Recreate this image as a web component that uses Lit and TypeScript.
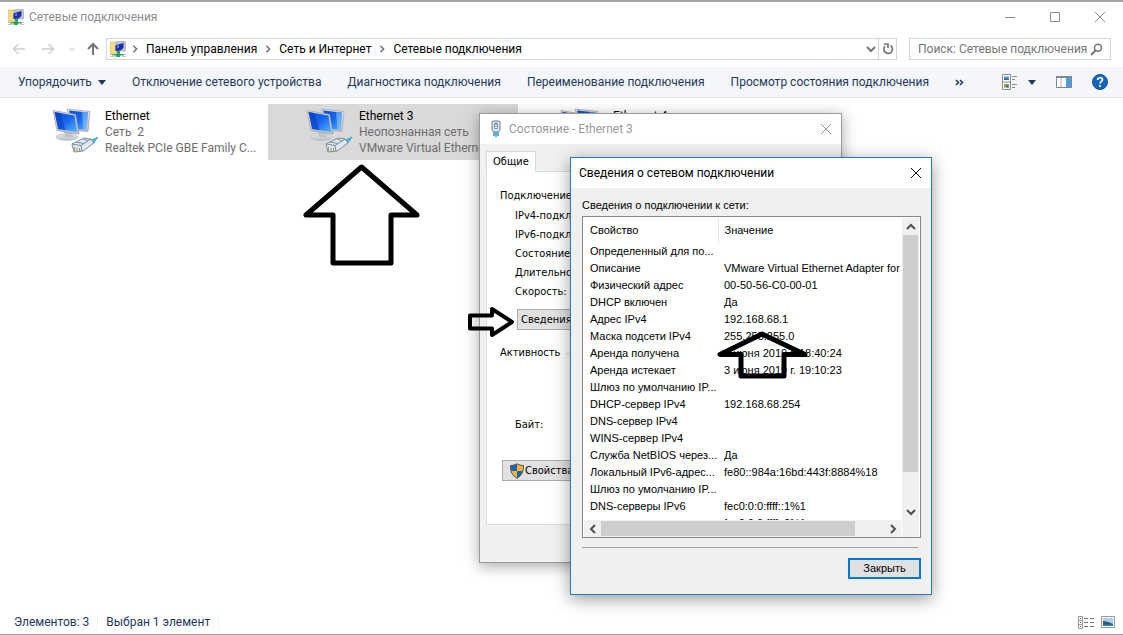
import { LitElement, html, css } from "lit";
import { customElement } from "lit/decorators.js";

const networkFolder = html`<svg width="16" height="16" viewBox="0 0 16 16" aria-hidden="true">
  <path d="M0 1h6l1 1v11H0z" fill="#f3dc83" stroke="#d5b95c" stroke-width=".6" />
  <path d="M6 1l9-1 1 7-1 3H6z" fill="#c3c9d4" stroke="#8f97a8" stroke-width=".6" />
  <path d="M5.500 4.500l4-1.500 4-1v5l-3 2.500-5 .5z" fill="#1c2fa8" />
  <path d="M7 5l2-1v3H7z" fill="#5d7ff0" />
  <path d="M7 10h3v3h4v1.500h-4V16H6v-1.500H2V13h5z" fill="#2aa35a" />
  <path d="M0 13.500h4M13 13.500h3M0 15.500h5M12 15.500h4" stroke="#9fb5b0" stroke-width=".7" />
</svg>`;

const adapterIcon = html`<svg width="48" height="48" viewBox="0 0 48 48" aria-hidden="true">
  <defs>
    <linearGradient id="scr" x1="0" y1="0" x2="1" y2="1">
      <stop offset="0" stop-color="#0d48d0" /><stop offset=".5" stop-color="#1767f2" />
      <stop offset="1" stop-color="#5fb6ff" />
    </linearGradient>
    <linearGradient id="metal" x1="0" y1="0" x2="0" y2="1">
      <stop offset="0" stop-color="#e6e8ea" /><stop offset="1" stop-color="#bcc1c7" />
    </linearGradient>
  </defs>
  <path d="M15 1l23 2.500-2 20-14-1z" fill="url(#metal)" stroke="#a5abb2" stroke-width=".8" />
  <path d="M17 2.500l19 2-1.500 17.500-11-1z" fill="url(#scr)" />
  <path d="M30 4l6 .7-1.500 17-3-.3z" fill="#9ad4ff" opacity=".5" />
  <ellipse cx="15" cy="29" rx="11" ry="3.500" fill="url(#metal)" stroke="#b9bdc2" stroke-width=".6" />
  <path d="M12 23h8l1 6h-8z" fill="#bfc4ca" />
  <path d="M1 2.500l22.500 4L27 26 5 22.500z" fill="url(#metal)" stroke="#9fa6ae" stroke-width=".8" />
  <path d="M2.500 4l20 3.500 2.800 16.500L6.200 21z" fill="url(#scr)" />
  <path d="M2.500 4l6 1 5 17.200-7.300-1.200z" fill="#0839b8" opacity=".5" />
  <path d="M36 32q5 0 10-3l-4 6-6 2z" fill="#45bfe0" stroke="#2b94bd" stroke-width=".6" />
  <path d="M20 36l12-6 7 1 3 4-11 8-9 1z" fill="#dfe8f1" stroke="#6f8397" stroke-width=".9" />
  <path d="M20 36l9 1.500 1 6M29 37.500l10-6.500M24 34l8 1.500M31 31l5 2" fill="none" stroke="#6f8397" stroke-width=".9" />
  <path d="M22.500 39v4M25 39.500v4M27.500 40v3.500" stroke="#9a9254" stroke-width=".9" />
</svg>`;

const cross = html`<svg width="12" height="12" viewBox="0 0 12 12" aria-hidden="true">
  <path d="M1 1l10 10M11 1L1 11" fill="none" stroke="currentColor" />
</svg>`;

const chevron = (d: string, size = 10) => html`<svg width=${size} height=${size} viewBox="0 0 10 10" aria-hidden="true">
  <path d=${d} fill="none" stroke="currentColor" stroke-width="2" />
</svg>`;
const UP = "M1 7l4-4 4 4";
const DOWN = "M1 3l4 4 4-4";
const LEFT = "M7 1L3 5l4 4";
const RIGHT = "M3 1l4 4-4 4";

const adapters = [
  { name: "Ethernet", state: "Сеть  2", device: "Realtek PCIe GBE Family C...", selected: false },
  { name: "Ethernet 3", state: "Неопознанная сеть", device: "VMware Virtual Ethernet ...", selected: true },
  { name: "Ethernet 4", state: "", device: "", selected: false },
];

const details: [string, string][] = [
  ["Определенный для по...", ""],
  ["Описание", "VMware Virtual Ethernet Adapter for VMnet1"],
  ["Физический адрес", "00-50-56-C0-00-01"],
  ["DHCP включен", "Да"],
  ["Адрес IPv4", "192.168.68.1"],
  ["Маска подсети IPv4", "255.255.255.0"],
  ["Аренда получена", "3 июня 2019 г. 18:40:24"],
  ["Аренда истекает", "3 июня 2019 г. 19:10:23"],
  ["Шлюз по умолчанию IP...", ""],
  ["DHCP-сервер IPv4", "192.168.68.254"],
  ["DNS-сервер IPv4", ""],
  ["WINS-сервер IPv4", ""],
  ["Служба NetBIOS через...", "Да"],
  ["Локальный IPv6-адрес...", "fe80::984a:16bd:443f:8884%18"],
  ["Шлюз по умолчанию IP...", ""],
  ["DNS-серверы IPv6", "fec0:0:0:ffff::1%1"],
  ["", "fec0:0:0:ffff::2%1"],
];

const controls = css`
  * { box-sizing: border-box; }
  button {
    font: inherit; color: inherit; background: none; border: 0; padding: 0; margin: 0;
    display: inline-flex; align-items: center; justify-content: center; white-space: nowrap;
  }
  svg { display: block; flex: none; }
`;

@customElement("status-window")
export class StatusWindow extends LitElement {
  static styles = [controls, css`
    :host {
      display: flex; flex-direction: column; background: #f0f0f0; border: 1px solid #9a9a9a;
      box-shadow: 0 3px 14px rgba(0, 0, 0, .35);
      font: 11px/14px "DejaVu Sans Condensed", "DejaVu Sans", sans-serif; color: #000;
    }
    .title { display: flex; align-items: center; gap: 6px; height: 30px; padding: 0 9px; background: #fff; color: #999; font: 12px/16px Roboto, sans-serif; }
    .title .name { flex: 1; }
    .body { flex: 1; display: flex; flex-direction: column; padding: 7px 6px 37px; }
    .tab { align-self: flex-start; height: 21px; padding: 0 6px; background: #fff; border: 1px solid #d9d9d9; border-bottom: 0; margin-bottom: -1px; z-index: 1; }
    .panel { flex: 1; display: flex; flex-direction: column; align-items: flex-start; background: #fff; border: 1px solid #dcdcdc; padding: 15px 13px; }
    .group { display: flex; align-items: center; gap: 6px; align-self: stretch; height: 18px; }
    .group::after { content: ""; flex: 1; border-top: 1px solid #dcdcdc; }
    .facts { list-style: none; margin: 0; padding: 1px 15px 8px; line-height: 19px; }
    .push { height: 21px; padding: 0 3px; background: #e1e1e1; border: 1px solid #adadad; }
    .details { margin: 0 17px 14px; }
    .bytes { padding: 54px 15px 26px; line-height: 18px; }
    .props { margin-left: 2px; padding: 0 6px; }
  `];
  render() {
    return html`
      <header class="title">
        <svg width="14" height="18" viewBox="0 0 14 18" aria-hidden="true">
          <path d="M4 1h6l1 1v8l-2 2H5l-2-2V2z" fill="#dce7f2" stroke="#667d99" />
          <path d="M5.500 3.500h3v5h-3zM7 2v5" fill="#fff" stroke="#7890aa" />
          <path d="M5 12v4M7 12v5M9 12v4" stroke="#2b9fc4" stroke-width="1.500" />
        </svg>
        <span class="name">Состояние - Ethernet 3</span>
        <button aria-label="Закрыть">${cross}</button>
      </header>
      <div class="body">
        <button class="tab" role="tab" aria-selected="true">Общие</button>
        <section class="panel">
          <div class="group">Подключение</div>
          <ul class="facts">
            <li>IPv4-подключение:</li><li>IPv6-подключение:</li><li>Состояние среды:</li>
            <li>Длительность:</li><li>Скорость:</li>
          </ul>
          <button class="push details">Сведения...</button>
          <div class="group">Активность</div>
          <div class="bytes">Байт:</div>
          <button class="push props">
            <svg width="16" height="16" viewBox="0 0 16 16" aria-hidden="true">
              <path d="M8 .8C6 2 3.500 2.500 1.500 2.500c0 6 1.500 10 6.500 12.700 5-2.700 6.500-6.700 6.500-12.700C12.500 2.500 10 2 8 .8z" fill="#1e62b0" />
              <path d="M8 .8C10 2 12.500 2.500 14.500 2.500q0 3-.7 5.500H8zM2.200 8H8v7.200C4.500 13.300 3 11 2.200 8z" fill="#f5b836" />
              <path d="M8 .8C6 2 3.500 2.500 1.500 2.500c0 6 1.500 10 6.500 12.700 5-2.700 6.500-6.700 6.500-12.700C12.500 2.500 10 2 8 .8z" fill="none" stroke="#555" />
            </svg>Свойства
          </button>
        </section>
      </div>`;
  }
}

@customElement("details-window")
export class DetailsWindow extends LitElement {
  static styles = [controls, css`
    :host {
      display: flex; flex-direction: column; background: #f0f0f0; border: 1px solid #2a7ab8;
      box-shadow: 0 4px 16px rgba(0, 0, 0, .4);
      font: 11px/17px "Liberation Sans", Arial, sans-serif; color: #000;
    }
    .title { display: flex; align-items: center; justify-content: space-between; height: 30px; padding: 0 9px 0 8px; background: #fff; font: 12px/16px Roboto, sans-serif; }
    .body { display: flex; flex-direction: column; padding: 9px 10px 14px 11px; }
    .caption { padding-bottom: 2px; }
    .list { display: grid; grid-template: 302px 17px / 1fr 17px; border: 1px solid #828790; background: #fff; padding: 1px 1px 0; }
    .view { overflow: hidden; }
    table { table-layout: fixed; width: 100%; border-collapse: collapse; }
    th, td { text-align: left; font-weight: 400; padding: 0 0 0 6px; white-space: nowrap; overflow: hidden; }
    th { height: 25px; }
    td { height: 17px; }
    .key { width: 134px; border-right: 1px solid #e5e5e5; }
    .bar { display: flex; background: #f0f0f0; color: #505050; }
    .bar button { flex: none; width: 17px; height: 17px; }
    .vert { flex-direction: column; align-items: center; }
    .horz { align-items: center; margin-right: 1px; }
    .thumb { background: #cdcdcd; }
    .vert .thumb { height: 237px; width: 15px; }
    .horz .thumb { width: 254px; height: 15px; }
    .space { flex: 1; }
    .corner { background: #f0f0f0; }
    .rule { border: 0; border-top: 1px solid #a0a0a0; margin: 9px 3px 10px 0; align-self: stretch; }
    .close { align-self: flex-end; width: 73px; height: 21px; background: #e1e1e1; border: 2px solid #0078d7; }
  `];
  render() {
    return html`
      <header class="title">
        <span>Сведения о сетевом подключении</span>
        <button aria-label="Закрыть">${cross}</button>
      </header>
      <div class="body">
        <span id="caption" class="caption">Сведения о подключении к сети:</span>
        <div class="list">
          <div class="view">
            <table aria-labelledby="caption">
              <thead><tr><th class="key">Свойство</th><th>Значение</th></tr></thead>
              <tbody>${details.map(([k, v]) => html`<tr><td>${k}</td><td>${v}</td></tr>`)}</tbody>
            </table>
          </div>
          <div class="bar vert">
            <button aria-label="Вверх">${chevron(UP)}</button>
            <div class="thumb"></div><div class="space"></div>
            <button aria-label="Вниз">${chevron(DOWN)}</button>
          </div>
          <div class="bar horz">
            <button aria-label="Влево">${chevron(LEFT)}</button>
            <div class="thumb"></div><div class="space"></div>
            <button aria-label="Вправо">${chevron(RIGHT)}</button>
          </div>
          <div class="corner"></div>
        </div>
        <hr class="rule" />
        <button class="close">Закрыть</button>
      </div>`;
  }
}

@customElement("app-root")
export class AppRoot extends LitElement {
  static styles = [controls, css`
    :host {
      display: flex; flex-direction: column; position: relative; height: 100vh; overflow: hidden;
      background: #fff; border-top: 2px solid #a6a6a6; border-bottom: 1px solid #a0a0a0;
      font: 12px/16px Roboto, sans-serif; color: #000; box-sizing: border-box;
    }
    .title { display: flex; align-items: center; gap: 5px; height: 29px; padding: 0 17px 0 8px; color: #8c8c8c; }
    .title .name { flex: 1; }
    .sys { display: flex; gap: 33px; }
    .nav { display: flex; align-items: center; height: 36px; padding: 0 12px; color: #767676; }
    .steps { display: flex; align-items: center; width: 94px; gap: 15px; }
    .faint { color: #d0d0d0; }
    .steps .recent { margin: 0 -4px 0 -1px; }
    .address { flex: 1; display: flex; align-items: center; height: 22px; border: 1px solid #d4d4d4; padding-left: 3px; }
    .crumbs { flex: 1; display: flex; align-items: center; gap: 7px; padding-left: 5px; }
    .crumbs a { color: #000; text-decoration: none; }
    .reload { width: 18px; height: 20px; border-left: 1px solid #d4d4d4; }
    .drop { margin-right: 2px; }
    .search { display: flex; align-items: center; width: 202px; height: 22px; margin-left: 12px; padding: 0 7px 0 8px; border: 1px solid #d4d4d4; }
    .search input { flex: 1; min-width: 0; border: 0; padding: 0; font: inherit; background: none; outline: 0; }
    .search input::placeholder { color: #767676; opacity: 1; }
    .tools { display: flex; align-items: center; gap: 26px; height: 31px; padding: 0 15px 0 18px; background: #f4f6f9; border-bottom: 1px solid #e3e6ea; color: #1e395b; }
    .tools .menu { gap: 6px; }
    .right { display: flex; align-items: center; gap: 20px; margin-left: auto; }
    .view { gap: 10px; }
    .files { flex: 1; display: flex; gap: 4px; align-items: flex-start; padding: 6px 14px; }
    .item { display: flex; align-items: center; gap: 5px; width: 250px; height: 56px; padding-left: 38px; overflow: hidden; flex: none; }
    .item.selected { background: #d9d9d9; }
    .lines { display: flex; flex-direction: column; height: 48px; white-space: pre; color: #6d6d6d; }
    .lines b { font-weight: 400; color: #000; }
    .status { display: flex; align-items: center; height: 24px; padding: 0 8px 0 14px; color: #1e395b; }
    .status .cell { padding-right: 8px; margin-right: 8px; border-right: 1px solid #f0f0f0; }
    .status .modes { display: flex; gap: 7px; margin-left: auto; }
    .win, .mark { position: absolute; }
    .state { left: 479px; top: 111px; width: 363px; height: 450px; }
    .info { left: 570px; top: 155px; width: 362px; height: 438px; }
    .mark { fill: none; stroke: #000; stroke-linejoin: round; pointer-events: none; }
    .m1 { left: 300px; top: 158px; }
    .m2 { left: 465px; top: 300px; }
    .m3 { left: 714px; top: 328px; }
  `];
  render() {
    const sep = chevron(RIGHT, 8);
    const arrow = (d: string) => html`<svg width="14" height="14" viewBox="0 0 14 14" aria-hidden="true"><path d=${d} fill="none" stroke="currentColor" stroke-width="1.500" /></svg>`;
    const caret = html`<svg width="8" height="5" viewBox="0 0 8 5" aria-hidden="true"><path d="M0 0h8L4 5z" fill="currentColor" /></svg>`;
    return html`
      <header class="title">
        ${networkFolder}<span class="name">Сетевые подключения</span>
        <div class="sys">
          <button aria-label="Свернуть"><svg width="12" height="12" viewBox="0 0 12 12"><path d="M1 6.500h10" stroke="currentColor" /></svg></button>
          <button aria-label="Развернуть"><svg width="12" height="12" viewBox="0 0 12 12"><path d="M1.500 1.500h9v9h-9z" fill="none" stroke="currentColor" /></svg></button>
          <button aria-label="Закрыть">${cross}</button>
        </div>
      </header>
      <nav class="nav">
        <div class="steps">
          <button class="faint" aria-label="Назад">${arrow("M13 7H2M6.500 2L1.500 7l5 5")}</button>
          <button class="faint" aria-label="Вперед">${arrow("M1 7h11M7.500 2l5 5-5 5")}</button>
          <button class="faint recent" aria-label="Последние">${chevron(DOWN, 6)}</button>
          <button aria-label="Вверх"><svg width="14" height="14" viewBox="0 0 14 14"><path d="M7 13V2M2 7l5-5 5 5" fill="none" stroke="currentColor" stroke-width="2" /></svg></button>
        </div>
        <div class="address">
          ${networkFolder}
          <div class="crumbs">
            ${sep}<a href="#">Панель управления</a>${sep}<a href="#">Сеть и Интернет</a>${sep}<a href="#">Сетевые подключения</a>
          </div>
          <button class="drop" aria-label="История">${chevron(DOWN)}</button>
          <button class="reload" aria-label="Обновить"><svg width="12" height="12" viewBox="0 0 12 12"><path d="M8.500 2.500A4.300 4.300 0 1 1 3 3.200M2 1h4v4" fill="none" stroke="currentColor" stroke-width="1.700" /></svg></button>
        </div>
        <label class="search">
          <input type="text" aria-label="Поиск" placeholder="Поиск: Сетевые подключения" />
          <svg width="13" height="13" viewBox="0 0 13 13" aria-hidden="true"><circle cx="8" cy="4.700" r="3.500" fill="none" stroke="currentColor" stroke-width="1.600" /><path d="M5.500 7.500L1 12" stroke="currentColor" stroke-width="2" /></svg>
        </label>
      </nav>
      <div class="tools">
        <button class="menu">Упорядочить ${caret}</button>
        <button>Отключение сетевого устройства</button>
        <button>Диагностика подключения</button>
        <button>Переименование подключения</button>
        <button>Просмотр состояния подключения</button>
        <button class="more" aria-label="Еще"><svg width="9" height="7" viewBox="0 0 9 7"><path d="M1 1l2.500 2.500L1 6M5 1l2.500 2.500L5 6" fill="none" stroke="currentColor" stroke-width="1.500" /></svg></button>
        <div class="right">
          <button class="view" aria-label="Представление">
            <svg width="16" height="16" viewBox="0 0 16 16"><path d="M.5.500h8v15h-8zM.5 8h8" fill="#fff" stroke="#8b8b8b" /><path d="M2 2.500h5v3.500H2z" fill="#4c9ad4" /><path d="M2 10h5v3.500H2z" fill="#90a646" /><path d="M2 5l2-1.500L7 6H2zM4 12l2-1 1 2.500H4z" fill="#40698a" /><path d="M10 2.500h5M10 5.500h3M10 10.500h5M10 13.500h3" stroke="#8b8b8b" /></svg>
            ${caret}
          </button>
          <button aria-label="Область просмотра"><svg width="16" height="12" viewBox="0 0 16 12"><path d="M.5.500h15v11H.5z" fill="#fff" stroke="#7f8790" /><path d="M0 1h16" stroke="#7f8790" stroke-width="2" /><path d="M5 2v9" stroke="#a9b3bd" /><path d="M10 2h5v9h-5z" fill="#48a0e0" /></svg></button>
          <button aria-label="Справка"><svg width="16" height="16" viewBox="0 0 16 16"><circle cx="8" cy="8" r="7.500" fill="#1463bd" stroke="#0b4f9c" /><path d="M5.700 6c0-3 4.800-3 4.800-.2C10.500 7.600 8 7.500 8 9.800" fill="none" stroke="#fff" stroke-width="1.700" /><circle cx="8" cy="12" r="1.100" fill="#fff" /></svg></button>
        </div>
      </div>
      <main class="files">
        ${adapters.map((a) => html`<div class="item ${a.selected ? "selected" : ""}">
          ${adapterIcon}<div class="lines"><b>${a.name}</b><span>${a.state}</span><span>${a.device}</span></div>
        </div>`)}
      </main>
      <footer class="status">
        <span class="cell">Элементов: 3</span><span class="cell">Выбран 1 элемент</span>
        <div class="modes">
          <button aria-label="Таблица"><svg width="16" height="13" viewBox="0 0 16 13"><path d="M.5.500h4v12h-4zM.5 4.500h4M.5 8.500h4" fill="#fff" stroke="#999" /><path d="M2 2.500h1M2 6.500h1M2 10.500h1" stroke="#444" /><path d="M6 2.500h4M12 2.500h4M6 6.500h4M12 6.500h4M6 10.500h4M12 10.500h4" stroke="#777" /></svg></button>
          <button aria-label="Крупные значки"><svg width="14" height="12" viewBox="0 0 14 12"><path d="M.5.500h13v11H.5z" fill="#fff" stroke="#999" /><path d="M2 2h10v8H2z" fill="#a8d0ee" /><path d="M2 5q4 0 10 3v2H2z" fill="#2d5b78" /><path d="M2 8.500h10V10H2z" fill="#2a82b8" /></svg></button>
        </div>
      </footer>
      <status-window class="win state"></status-window>
      <details-window class="win info"></details-window>
      <svg class="mark m1" width="124" height="110" viewBox="0 0 124 110" stroke-width="5"><path d="M61.500 7L6 55h27v48h58V55h26z" /></svg>
      <svg class="mark m2" width="54" height="36" viewBox="0 0 54 36" stroke-width="4"><path d="M5 13.500h22V7l20 13-20 13v-6.500H5z" /></svg>
      <svg class="mark m3" width="96" height="50" viewBox="0 0 96 50" stroke-width="5"><path d="M48 4L6 24.500h21V46h43V24.500h21z" /></svg>`;
  }
}
